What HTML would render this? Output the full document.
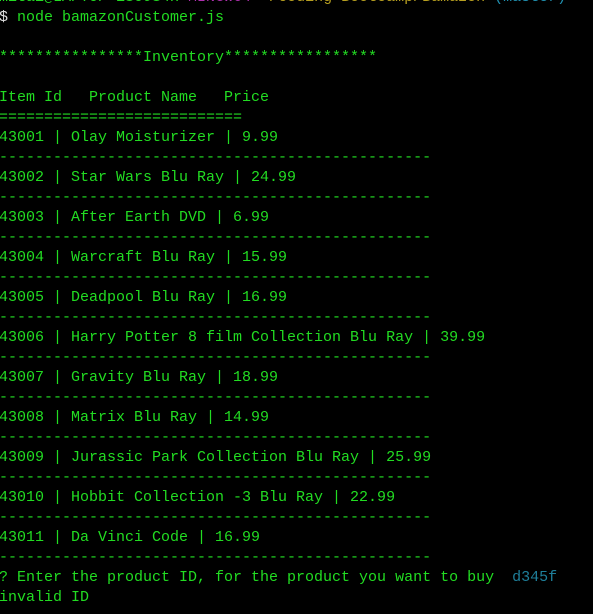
<!DOCTYPE html>
<html><head><style>
html,body{margin:0;padding:0;background:#000;width:593px;height:614px;overflow:hidden}
pre{margin:0;position:absolute;left:-1px;top:-12px;font-family:"Liberation Mono",monospace;font-size:15px;line-height:20px;color:#22dc22;white-space:pre}
.m{color:#b030b0}.y{color:#b8a020}.c{color:#2090b0}.w{color:#ddd}.d{color:#1e7f9a}
</style></head><body><pre>mitai@LAPTOP-1S09S4H <span class="m">MINGW64</span> <span class="y">~/Coding Bootcamp/Bamazon</span> <span class="c">(master)</span>
<span class="w">$</span> node bamazonCustomer.js

****************Inventory*****************

Item Id   Product Name   Price
===========================
43001 | Olay Moisturizer | 9.99
------------------------------------------------
43002 | Star Wars Blu Ray | 24.99
------------------------------------------------
43003 | After Earth DVD | 6.99
------------------------------------------------
43004 | Warcraft Blu Ray | 15.99
------------------------------------------------
43005 | Deadpool Blu Ray | 16.99
------------------------------------------------
43006 | Harry Potter 8 film Collection Blu Ray | 39.99
------------------------------------------------
43007 | Gravity Blu Ray | 18.99
------------------------------------------------
43008 | Matrix Blu Ray | 14.99
------------------------------------------------
43009 | Jurassic Park Collection Blu Ray | 25.99
------------------------------------------------
43010 | Hobbit Collection -3 Blu Ray | 22.99
------------------------------------------------
43011 | Da Vinci Code | 16.99
------------------------------------------------
? Enter the product ID, for the product you want to buy  <span class="d">d345f</span>
invalid ID
</pre></body></html>
